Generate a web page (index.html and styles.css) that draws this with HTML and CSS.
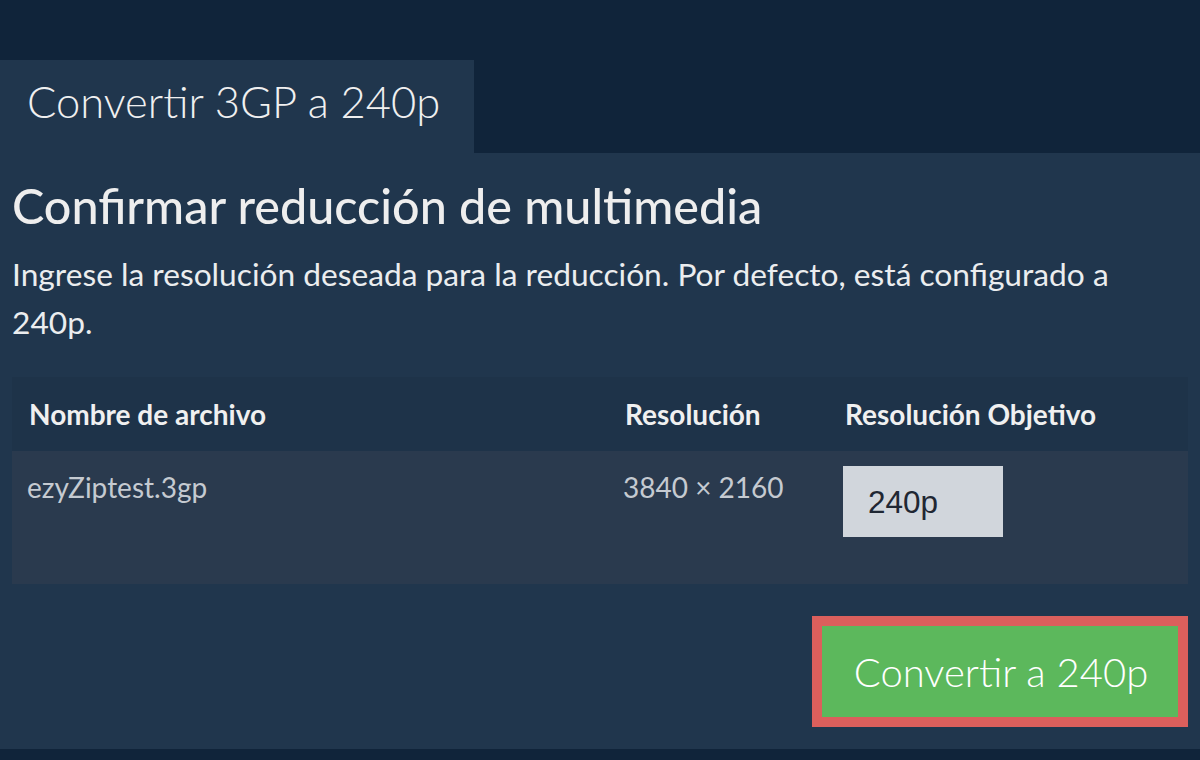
FILE: index.html
```html
<!DOCTYPE html>
<html lang="es">
<head>
<meta charset="utf-8">
<title>Convertir 3GP a 240p</title>
<link rel="stylesheet" href="styles.css">
</head>
<body>
<div class="top"></div>
<div class="tab">Convertir 3GP a 240p</div>
<main class="panel">
  <h1 class="title">Confirmar reducción de multimedia</h1>
  <p class="desc">Ingrese la resolución deseada para la reducción. Por defecto, está configurado a 240p.</p>
  <div class="table">
    <div class="row head">
      <div class="cell c1">Nombre de archivo</div>
      <div class="cell c2">Resolución</div>
      <div class="cell c3">Resolución Objetivo</div>
    </div>
    <div class="row body">
      <div class="cell c1">ezyZiptest.3gp</div>
      <div class="cell c2">3840 × 2160</div>
      <div class="cell c3"><input class="res" type="text" value="240p"></div>
    </div>
  </div>
  <div class="actions">
    <button class="convert">Convertir a 240p</button>
  </div>
</main>
</body>
</html>
```
FILE: styles.css
```css
html, body {
  margin: 0;
  padding: 0;
}
body {
  background: #10243a;
  font-family: Lato, "Open Sans", sans-serif;
  color: #eeeeee;
  width: 1200px;
  height: 760px;
  overflow: hidden;
}
.top {
  height: 60px;
}
.tab {
  width: 447px;
  height: 93px;
  padding-left: 27px;
  background: #20364d;
  font-weight: 300;
  font-size: 43.5px;
  line-height: 82px;
  color: #f0f0f0;
}
.panel {
  display: flex;
  flex-direction: column;
  background: #20364d;
  height: 596px;
  padding: 0 12px;
  box-sizing: border-box;
}
.title {
  margin: 23px 0 0;
  font-size: 48.5px;
  font-weight: 500;
  line-height: 58px;
  color: #eeeeee;
}
.desc {
  margin: 16px 0 0;
  max-width: 1140px;
  font-size: 31.7px;
  line-height: 48px;
  color: #ebedef;
}
.table {
  margin-top: 31px;
  display: flex;
  flex-direction: column;
}
.row {
  display: grid;
  grid-template-columns: 596px 220px 360px;
}
.row.head {
  background: #1e3349;
  height: 74px;
  align-items: center;
  font-weight: 700;
  font-size: 28px;
  color: #f0f0f0;
}
.row.body {
  background: #2a3a4e;
  height: 133px;
  align-items: start;
  font-size: 28px;
  line-height: 34px;
  color: #c5cad1;
}
.cell {
  padding-left: 17px;
}
.row.body .c1, .row.body .c2 {
  padding-top: 19px;
  padding-left: 15px;
}
.row.body .c3 {
  padding-top: 15px;
  padding-left: 15px;
}
.res {
  display: block;
  box-sizing: border-box;
  width: 160px;
  height: 71px;
  border: none;
  outline: none;
  background: #d1d6dc;
  padding: 2px 0 0 25px;
  font-family: "Liberation Sans", Arial, sans-serif;
  font-size: 31.5px;
  color: #1f2733;
}
.actions {
  display: flex;
  justify-content: flex-end;
  margin-top: 32px;
}
.convert {
  box-sizing: border-box;
  width: 376px;
  height: 111px;
  border: 10px solid #db5f5c;
  background: #5cb85c;
  color: #ffffff;
  font-family: Lato, sans-serif;
  font-weight: 300;
  font-size: 40px;
  padding: 0 0 0 2px;
  cursor: pointer;
}
```
